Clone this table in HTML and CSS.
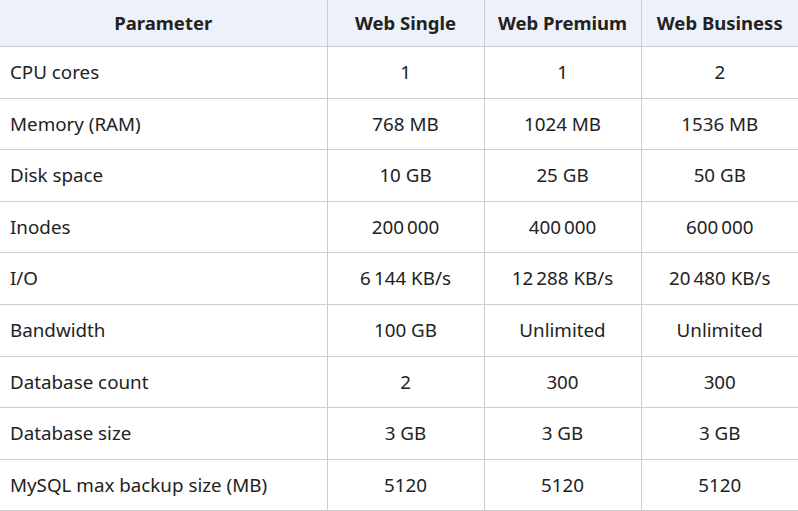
FILE: index.html
```html
<!DOCTYPE html>
<html>
<head>
<meta charset="utf-8">
<link rel="stylesheet" href="styles.css">
</head>
<body>
<table class="plans">
  <colgroup>
    <col class="c-param"><col class="c-plan"><col class="c-plan"><col class="c-plan">
  </colgroup>
  <thead>
    <tr><th>Parameter</th><th>Web Single</th><th>Web Premium</th><th>Web Business</th></tr>
  </thead>
  <tbody>
    <tr><td>CPU cores</td><td>1</td><td>1</td><td>2</td></tr>
    <tr><td>Memory (RAM)</td><td>768 MB</td><td>1024 MB</td><td>1536 MB</td></tr>
    <tr><td>Disk space</td><td>10 GB</td><td>25 GB</td><td>50 GB</td></tr>
    <tr><td>Inodes</td><td>200&#8239;000</td><td>400&#8239;000</td><td>600&#8239;000</td></tr>
    <tr><td>I/O</td><td>6&#8239;144 KB/s</td><td>12&#8239;288 KB/s</td><td>20&#8239;480 KB/s</td></tr>
    <tr><td>Bandwidth</td><td>100 GB</td><td>Unlimited</td><td>Unlimited</td></tr>
    <tr><td>Database count</td><td>2</td><td>300</td><td>300</td></tr>
    <tr><td>Database size</td><td>3 GB</td><td>3 GB</td><td>3 GB</td></tr>
    <tr><td>MySQL max backup size (MB)</td><td>5120</td><td>5120</td><td>5120</td></tr>
  </tbody>
</table>
</body>
</html>
```
FILE: styles.css
```css
html, body {
  margin: 0;
  padding: 0;
  background: #ffffff;
}
body {
  font-family: "Noto Sans", "Open Sans", sans-serif;
  color: #222222;
}
.plans {
  border-collapse: collapse;
  table-layout: fixed;
  width: 798px;
  font-size: 18.8px;
}
.c-param { width: 327px; }
.c-plan { width: 157px; }
.plans th, .plans td {
  border-right: 1px solid #cccccc;
  border-bottom: 1px solid #cccccc;
  text-align: center;
  vertical-align: middle;
  padding: 0 10px;
  white-space: nowrap;
  line-height: 1.3;
}
.plans th:last-child, .plans td:last-child {
  border-right: none;
}
.plans th {
  background: #eff1fa;
  font-weight: 700;
  font-size: 18.5px;
  height: 46px;
}
.plans td {
  height: 50.6px;
}
.plans td:first-child {
  text-align: left;
}
```
